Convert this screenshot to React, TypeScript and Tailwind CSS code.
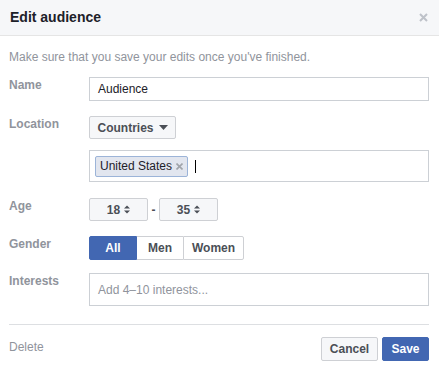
import React from 'react'

const font = { fontFamily: '"Liberation Sans", Arial, sans-serif' }

function Label({ children }: { children: React.ReactNode }) {
  return (
    <div className="w-[80px] shrink-0 text-[12px] leading-4 font-bold text-[#90949c]">
      {children}
    </div>
  )
}

function Spin() {
  return (
    <svg width="6" height="9" viewBox="0 0 6 9" className="ml-[4px]">
      <path d="M0 3.5 L3 0.5 L6 3.5 Z" fill="#4b4f56" />
      <path d="M0 5.5 L3 8.5 L6 5.5 Z" fill="#4b4f56" />
    </svg>
  )
}

export default function App() {
  return (
    <div className="w-[439px] h-[371px] bg-white text-[#1d2129]" style={font}>
      {/* Header */}
      <div className="h-[36px] bg-[#f6f7f9] border-b border-[#e5e5e5] flex items-center justify-between pl-[10px] pr-[11px]">
        <span className="text-[14px] font-bold text-[#1d2129]">Edit audience</span>
        <svg width="9" height="9" viewBox="0 0 9 9">
          <path d="M1 1 L8 8 M8 1 L1 8" stroke="#bec2c9" strokeWidth="2" />
        </svg>
      </div>

      <div className="pl-[9px] pr-[10px]">
        <div className="pt-[13px] text-[12px] leading-4 text-[#90949c]">
          Make sure that you save your edits once you've finished.
        </div>

        {/* Name */}
        <div className="flex mt-[12px]">
          <Label>Name</Label>
          <div className="flex-1 h-[24px] border border-[#ccd0d5] flex items-center px-[8px] text-[12px]">
            Audience
          </div>
        </div>

        {/* Location */}
        <div className="flex mt-[15px]">
          <Label>Location</Label>
          <div className="flex-1">
            <button className="h-[23px] w-[87px] border border-[#ced0d4] rounded-[2px] bg-[#f6f7f9] flex items-center justify-center gap-[5px] text-[12px] font-bold text-[#4b4f56]">
              Countries
              <svg width="9" height="5" viewBox="0 0 9 5">
                <path d="M0 0 L9 0 L4.5 5 Z" fill="#4b4f56" />
              </svg>
            </button>
            <div className="mt-[11px] h-[32px] border border-[#ccd0d5] flex items-center pl-[5px]">
              <span className="h-[21px] w-[93px] border border-[#9cb4d8] rounded-[2px] bg-[#e2e6ef] flex items-center pl-[4px] text-[12px] text-[#1d2129]">
                United States
                <svg width="7" height="7" viewBox="0 0 7 7" className="ml-[4px]">
                  <path d="M0.5 0.5 L6.5 6.5 M6.5 0.5 L0.5 6.5" stroke="#a0a4aa" strokeWidth="1.6" />
                </svg>
              </span>
              <span className="ml-[7px] w-[1px] h-[13px] bg-black" />
            </div>
          </div>
        </div>

        {/* Age */}
        <div className="flex mt-[16px]">
          <Label>Age</Label>
          <div className="flex items-center">
            <button className="h-[23px] w-[59px] border border-[#ced0d4] rounded-[2px] bg-[#f6f7f9] flex items-center justify-center text-[12px] font-bold text-[#4b4f56]">
              18
              <Spin />
            </button>
            <span className="w-[11px] text-center text-[12px] font-bold text-[#4b4f56]">-</span>
            <button className="h-[23px] w-[59px] border border-[#ced0d4] rounded-[2px] bg-[#f6f7f9] flex items-center justify-center text-[12px] font-bold text-[#4b4f56]">
              35
              <Spin />
            </button>
          </div>
        </div>

        {/* Gender */}
        <div className="flex mt-[15px]">
          <Label>Gender</Label>
          <div className="flex h-[24px] text-[12px] font-bold">
            <button className="w-[48px] bg-[#4267b2] border border-[#4267b2] rounded-l-[2px] text-white">All</button>
            <button className="w-[46px] bg-white border-y border-[#ced0d4] text-[#4b4f56]">Men</button>
            <button className="w-[61px] bg-white border border-[#ced0d4] rounded-r-[2px] text-[#4b4f56]">Women</button>
          </div>
        </div>

        {/* Interests */}
        <div className="flex mt-[13px]">
          <Label>Interests</Label>
          <div className="flex-1 h-[33px] border border-[#ccd0d5] flex items-center px-[8px] text-[12px] text-[#90949c]">
            Add 4–10 interests...
          </div>
        </div>

        <div className="mt-[18px] border-t border-[#dddfe2]" />

        {/* Footer */}
        <div className="flex items-center justify-between mt-[12px]">
          <span className="text-[12px] text-[#90949c] -mt-[4px]">Delete</span>
          <div className="flex gap-[4px]">
            <button className="h-[24px] w-[57px] border border-[#ced0d4] rounded-[2px] bg-[#f6f7f9] text-[12px] font-bold text-[#4b4f56]">
              Cancel
            </button>
            <button className="h-[24px] w-[47px] border border-[#4267b2] rounded-[2px] bg-[#4267b2] text-[12px] font-bold text-white">
              Save
            </button>
          </div>
        </div>
      </div>
    </div>
  )
}
